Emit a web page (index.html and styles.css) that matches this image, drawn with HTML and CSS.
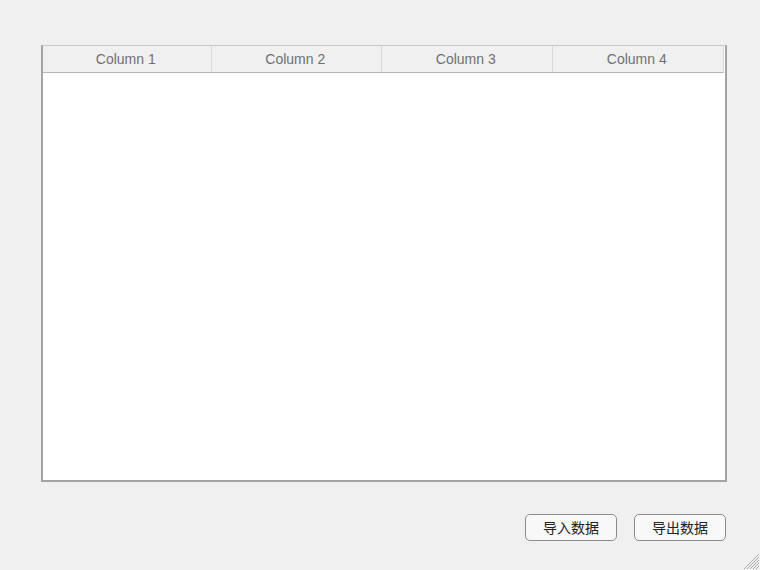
FILE: index.html
```html
<!DOCTYPE html>
<html>
<head>
<meta charset="utf-8">
<link rel="stylesheet" href="styles.css">
</head>
<body>
<div class="window">
  <div class="table">
    <div class="thead">
      <div class="th">Column 1</div>
      <div class="th">Column 2</div>
      <div class="th">Column 3</div>
      <div class="th">Column 4</div>
    </div>
    <div class="tbody"></div>
  </div>
  <div class="actions">
    <button class="btn">导入数据</button>
    <button class="btn">导出数据</button>
  </div>
  <svg class="grip" width="18" height="18" viewBox="0 0 18 18">
    <g stroke="#a8a8a8" stroke-width="1">
      <line x1="18" y1="3" x2="3" y2="18"/>
      <line x1="18" y1="6" x2="6" y2="18"/>
      <line x1="18" y1="9" x2="9" y2="18"/>
      <line x1="18" y1="12" x2="12" y2="18"/>
      <line x1="18" y1="15" x2="15" y2="18"/>
    </g>
  </svg>
</div>
</body>
</html>
```
FILE: styles.css
```css
html, body {
  margin: 0;
  padding: 0;
  background: #f0f0f0;
}
.window {
  position: relative;
  width: 760px;
  height: 570px;
  box-sizing: border-box;
  padding: 45px 33px 0 41px;
  font-family: "Liberation Sans", Arial, "Noto Sans CJK SC", sans-serif;
}
.table {
  width: 686px;
  height: 437px;
  box-sizing: border-box;
  border-top: 1px solid #c8c8c8;
  border-left: 2px solid #a3a3a3;
  border-right: 2px solid #a3a3a3;
  border-bottom: 2px solid #a3a3a3;
  background: #ffffff;
  display: flex;
  flex-direction: column;
}
.thead {
  display: flex;
  height: 27px;
  box-sizing: border-box;
  background: #f0f0f0;
  border-bottom: 1px solid #b4b4b4;
  margin-right: 1px;
  border-right: 1px solid #d8d8d8;
}
.th {
  width: 171px;
  box-sizing: border-box;
  border-right: 1px solid #d8d8d8;
  color: #707070;
  font-size: 14px;
  display: flex;
  align-items: center;
  justify-content: center;
  padding-right: 2px;
}
.th:first-child {
  width: 169px;
}
.th:last-child {
  border-right: none;
}
.tbody {
  flex: 1;
}
.actions {
  display: flex;
  justify-content: flex-end;
  gap: 17px;
  margin-top: 32px;
  width: 686px;
  padding-right: 1px;
  box-sizing: border-box;
}
.btn {
  width: 92px;
  height: 27px;
  box-sizing: border-box;
  border: 1px solid #8c8c8c;
  border-radius: 5px;
  background: #f8f8f8;
  color: #222;
  font-family: "Noto Sans CJK SC", sans-serif;
  font-size: 14px;
  padding: 0;
  line-height: 25px;
}
.grip {
  position: absolute;
  right: 1px;
  bottom: 1px;
}
```
